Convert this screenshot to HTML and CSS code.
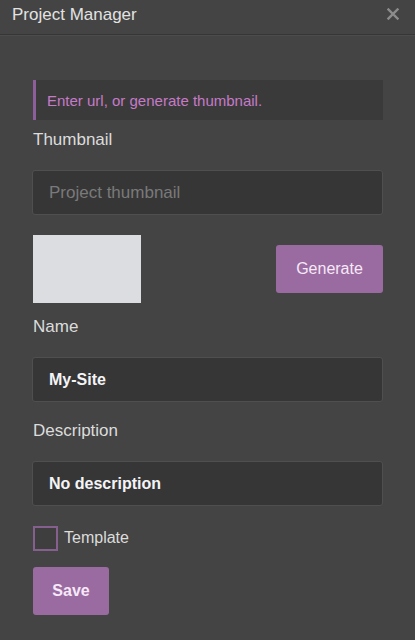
FILE: index.html
```html
<!DOCTYPE html>
<html>
<head>
<meta charset="utf-8">
<link rel="stylesheet" href="styles.css">
</head>
<body>
<div class="modal">
  <div class="header">
    <span class="title">Project Manager</span>
    <svg class="close" width="12" height="12" viewBox="0 0 12 12"><path d="M1.5 1.5 L10.5 10.5 M10.5 1.5 L1.5 10.5" stroke="#8c8c8c" stroke-width="2.4" stroke-linecap="square"/></svg>
  </div>
  <div class="content">
    <div class="alert">Enter url, or generate thumbnail.</div>
    <label class="label first">Thumbnail</label>
    <div class="input placeholder">Project thumbnail</div>
    <div class="thumb-row">
      <div class="preview"></div>
      <button class="btn generate">Generate</button>
    </div>
    <label class="label name">Name</label>
    <div class="input value">My-Site</div>
    <label class="label desc">Description</label>
    <div class="input value">No description</div>
    <div class="check-row">
      <span class="checkbox"></span>
      <span class="check-label">Template</span>
    </div>
    <button class="btn save">Save</button>
  </div>
</div>
</body>
</html>
```
FILE: styles.css
```css
html, body {
  margin: 0;
  padding: 0;
  background: #444444;
  font-family: "Liberation Sans", Arial, sans-serif;
}
.modal {
  width: 415px;
  height: 640px;
  background: #444444;
}
.header {
  height: 35px;
  border-bottom: 1px solid #363636;
  box-shadow: 0 1px 0 #4c4c4c;
  display: flex;
  align-items: center;
  justify-content: space-between;
  padding: 0 16px 4px 12px;
  box-sizing: border-box;
}
.title {
  color: #e2e2e2;
  font-size: 17px;
}
.close {
  display: block;
  margin-top: -3px;
}
.content {
  padding: 45px 32px 0 33px;
  display: flex;
  flex-direction: column;
}
.alert {
  height: 40px;
  box-sizing: border-box;
  background: #3a3a3a;
  border-left: 3px solid #8c5f9c;
  color: #c67ac8;
  font-size: 15px;
  padding-left: 11px;
  display: flex;
  align-items: center;
}
.label {
  display: block;
  color: #dcdcdc;
  font-size: 17px;
  line-height: 20px;
  margin-bottom: 20px;
}
.label.first { margin-top: 10px; }
.label.name { margin-top: 14px; }
.label.desc { margin-top: 19px; }
.input {
  height: 45px;
  box-sizing: border-box;
  margin-left: -1px;
  background: #363636;
  border: 1px solid #4f4f4f;
  border-radius: 3px;
  padding-left: 16px;
  display: flex;
  align-items: center;
  font-size: 16px;
}
.placeholder {
  color: #7a7a7a;
  font-size: 17px;
}
.value {
  color: #f4f4f6;
  font-weight: bold;
}
.thumb-row {
  display: flex;
  align-items: center;
  justify-content: space-between;
  margin-top: 20px;
}
.preview {
  width: 108px;
  height: 68px;
  background: #dcdde0;
}
.btn {
  border: none;
  background: #9a6ba0;
  color: #f6e8f8;
  font-family: "Liberation Sans", Arial, sans-serif;
  border-radius: 3px;
  padding: 0;
  cursor: pointer;
}
.generate {
  width: 107px;
  height: 48px;
  font-size: 16px;
}
.check-row {
  display: flex;
  align-items: center;
  margin-top: 20px;
  height: 25px;
}
.checkbox {
  width: 25px;
  height: 25px;
  box-sizing: border-box;
  border: 2px solid #85608f;
  background: #3e3e3e;
}
.check-label {
  color: #dcdcdc;
  font-size: 16px;
  margin-left: 6px;
  margin-top: -2px;
}
.save {
  align-self: flex-start;
  margin-top: 16px;
  width: 76px;
  height: 48px;
  font-size: 16px;
  font-weight: bold;
}
```
